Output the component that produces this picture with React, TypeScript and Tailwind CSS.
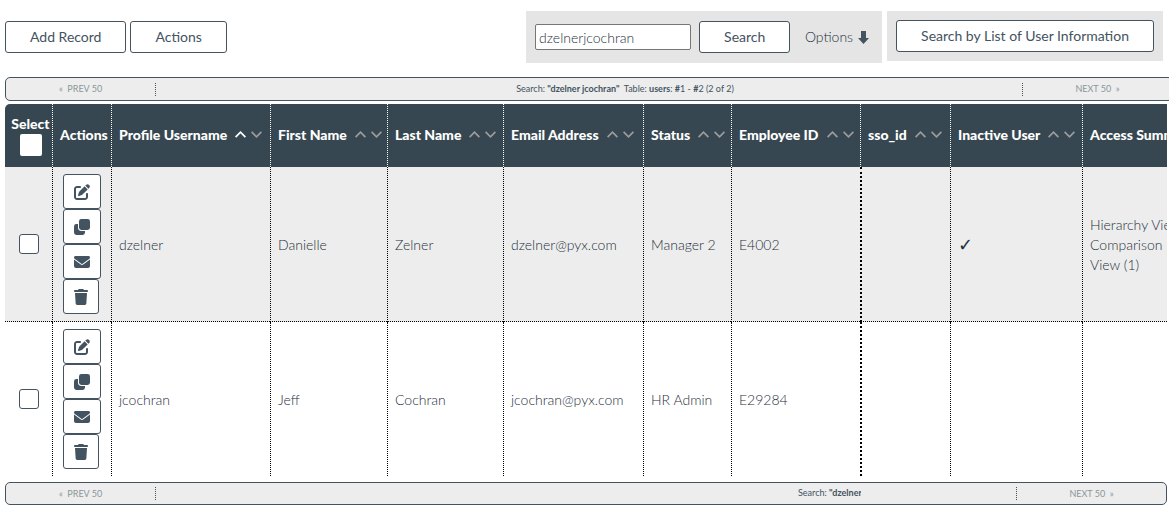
import React, { useState } from 'react'
import { FaEnvelope, FaPenToSquare, FaTrash } from 'react-icons/fa6'

interface User {
    username: string
    firstName: string
    lastName: string
    email: string
    status: string
    employeeId: string
    ssoId: string
    inactive: boolean
    access: string
}

interface Column {
    label: string
    width: string
    sorted?: boolean
}

const users: User[] = [
    {
        username: 'dzelner',
        firstName: 'Danielle',
        lastName: 'Zelner',
        email: 'dzelner@pyx.com',
        status: 'Manager 2',
        employeeId: 'E4002',
        ssoId: '',
        inactive: true,
        access: 'Hierarchy View, Comparison View (1)',
    },
    {
        username: 'jcochran',
        firstName: 'Jeff',
        lastName: 'Cochran',
        email: 'jcochran@pyx.com',
        status: 'HR Admin',
        employeeId: 'E29284',
        ssoId: '',
        inactive: false,
        access: '',
    },
]

const columns: Column[] = [
    { label: 'Profile Username', width: 'w-[159px]', sorted: true },
    { label: 'First Name', width: 'w-[117px]' },
    { label: 'Last Name', width: 'w-[116px]' },
    { label: 'Email Address', width: 'w-[140px]' },
    { label: 'Status', width: 'w-[88px]' },
    { label: 'Employee ID', width: 'w-[129px]' },
    { label: 'sso_id', width: 'w-[90px]' },
    { label: 'Inactive User', width: 'w-[132px]' },
    { label: 'Access Summary', width: '' },
]

const CloneIcon = ({ className }: { className?: string }) => (
    <svg viewBox="0 0 16 16" className={`fill-current ${className}`}>
        <rect x="5" y="0" width="11" height="11" rx="2.4" />
        <path d="M4 5H2.400A2.400 2.400 0 0 0 0 7.400v6.200A2.400 2.400 0 0 0 2.400 16h6.200a2.400 2.400 0 0 0 2.400-2.400V12H7.400A3.400 3.400 0 0 1 4 8.600z" />
    </svg>
)

const rowActions = [
    { label: 'Edit', icon: FaPenToSquare, size: 'w-[38px]' },
    { label: 'Copy', icon: CloneIcon, size: 'w-[38px]' },
    { label: 'Email', icon: FaEnvelope, size: 'w-[38px]' },
    { label: 'Delete', icon: FaTrash, size: 'w-9' },
]

const buttonStyle = 'h-8 rounded-[3px] border border-[#43535f] bg-white px-6 text-sm whitespace-nowrap'
const headStyle = 'border-l border-dotted border-white pb-[2px] pl-[7px] text-left align-middle font-black whitespace-nowrap'
const cellStyle = 'border-l border-dotted border-l-black px-[7px] pt-[2px] align-middle'
const boxStyle = 'block size-5 appearance-none rounded-[3px] border border-[#43535f] bg-white checked:bg-[#43535f]'

const SortArrows = ({ label, sorted }: { label: string, sorted?: boolean }) => (
    <button type="button" aria-label={`Sort by ${label}`} className="flex gap-[5px]">
        <svg viewBox="0 0 11 7" className={`h-[7px] w-[11px] fill-none stroke-[1.7] ${sorted ? 'stroke-white' : 'stroke-[#9b9b9b]'}`}>
            <path d="M0.6 6.2 5.5 1.2l4.9 5" />
        </svg>
        <svg viewBox="0 0 11 7" className="h-[7px] w-[11px] fill-none stroke-[#9b9b9b] stroke-[1.7]">
            <path d="M0.6 0.8 5.5 5.8l4.9-5" />
        </svg>
    </button>
)

interface PagerProps {
    className: string
    children: React.ReactNode
}

const Pager = ({ className, children }: PagerProps) => (
    <nav className={`flex items-center rounded-[5px] border border-[#43535f] bg-[#ededed] text-[9px] leading-3 ${className}`}>
        <div className="w-[149px] shrink-0 text-center">
            <a href="#prev" className="text-[#8a969a]">«&nbsp; PREV 50</a>
        </div>
        <div className="flex h-[13px] grow border-x border-dotted border-[#43535f]">
            {children}
        </div>
        <div className="w-[149px] shrink-0 text-center">
            <a href="#next" className="text-[#8a969a]">NEXT 50 &nbsp;»</a>
        </div>
    </nav>
)

const UserRow = ({ user }: { user: User }) => (
    <tr className="group h-[154px] odd:bg-[#ededed]">
        <td className="border-b border-dotted border-black group-last:border-b-0">
            <input type="checkbox" aria-label={`Select ${user.username}`} className={`${boxStyle} ml-[14px]`} />
        </td>
        <td className="border-b border-l border-dotted border-black py-[7px] pl-[10px] text-[#43535f] group-last:border-b-0">
            <div className="flex flex-col">
                {rowActions.map(({ label, icon: Icon, size }) => (
                    <button
                        key={label}
                        type="button"
                        aria-label={label}
                        className={`flex h-[35px] items-center justify-center rounded-[3px] border border-[#43535f] bg-white ${size}`}
                    >
                        <Icon className="size-4" />
                    </button>
                ))}
            </div>
        </td>
        {[user.username, user.firstName, user.lastName, user.email, user.status, user.employeeId].map((value) => (
            <td key={value} className={`${cellStyle} border-b border-b-black group-last:border-b-0`}>{value}</td>
        ))}
        <td className={`${cellStyle} border-b border-l-2 border-b-black group-last:border-b-0`}>{user.ssoId}</td>
        <td className={`${cellStyle} border-b border-b-black font-['DejaVu_Sans'] text-lg font-bold group-last:border-b-0`}>
            {user.inactive ? '✓' : ''}
        </td>
        <td className={`${cellStyle} border-b border-b-black group-last:border-b-0`}>
            <div className="w-[100px]">{user.access}</div>
        </td>
    </tr>
)

const App = () => {
    const [query, setQuery] = useState('dzelnerjcochran')

    return (
        <main className="w-full overflow-hidden bg-white pb-2 pl-[5px] font-[Lato,sans-serif] text-sm leading-5 text-[#43535f]">
            <header className="flex items-start justify-between pt-[11px] pr-[6px]">
                <div className="flex gap-1 pt-[10px]">
                    <button type="button" className={buttonStyle}>Add Record</button>
                    <button type="button" className={buttonStyle}>Actions</button>
                </div>
                <div className="flex items-start gap-[5px]">
                    <form
                        className="flex h-[52px] w-[356px] items-center gap-2 bg-[#e5e5e5] px-[9px]"
                        onSubmit={(e) => e.preventDefault()}
                    >
                        <input
                            type="text"
                            aria-label="Search users"
                            value={query}
                            onChange={(e) => setQuery(e.target.value)}
                            className="h-[26px] w-[156px] rounded-[2px] border border-[#767676] bg-white px-[3px] font-light text-[#1f303c]"
                        />
                        <button type="submit" className={buttonStyle}>Search</button>
                        <a href="#options" className="ml-auto flex items-center gap-[5px] pr-1 font-light text-[#1f303c]">
                            Options
                            <svg viewBox="0 0 11 13" className="h-[13px] w-[11px] fill-[#43535f]">
                                <path d="M3 0h5v7h3L5.500 13 0 7h3z" />
                            </svg>
                        </a>
                    </form>
                    <div className="bg-[#e5e5e5] p-[9px]">
                        <button type="button" className={buttonStyle}>Search by List of User Information</button>
                    </div>
                </div>
            </header>

            <Pager className="mt-[14px] -mr-1 h-6">
                <p className="grow pl-[72px] text-center">
                    Search: <b>"dzelner jcochran"</b>&nbsp; Table: <b>users</b>: <b>#</b>1 - <b>#</b>2 (2 of 2)
                </p>
            </Pager>

            <div className="mt-[3px] mr-[2px] overflow-hidden rounded-tl-[5px]">
                <table className="w-full min-w-[1230px] table-fixed border-separate border-spacing-0">
                    <thead>
                        <tr className="h-[63px] bg-[#374751] text-white">
                            <th className="w-[47px] pl-1 font-black">
                                <label className="flex flex-col items-center leading-[18px]">
                                    Select
                                    <input type="checkbox" className="mt-px size-[22px] appearance-none rounded-[2px] bg-white checked:bg-[#9b9b9b]" />
                                </label>
                            </th>
                            <th className={`${headStyle} w-[59px]`}>Actions</th>
                            {columns.map((column) => (
                                <th key={column.label} className={`${headStyle} ${column.width}`}>
                                    <div className="flex items-center gap-2">
                                        {column.label}
                                        <SortArrows label={column.label} sorted={column.sorted} />
                                    </div>
                                </th>
                            ))}
                        </tr>
                    </thead>
                    <tbody className="font-light text-[#1f303c]">
                        {users.map((user) => <UserRow key={user.username} user={user} />)}
                    </tbody>
                </table>
            </div>

            <Pager className="mt-[6px] mr-[2px] h-[23px]">
                <p className="ml-auto w-[218px] pr-[155px] whitespace-nowrap">
                    <span className="block overflow-hidden">Search: <b>"dzelner jcochran"</b></span>
                </p>
            </Pager>
        </main>
    )
}

export default App
